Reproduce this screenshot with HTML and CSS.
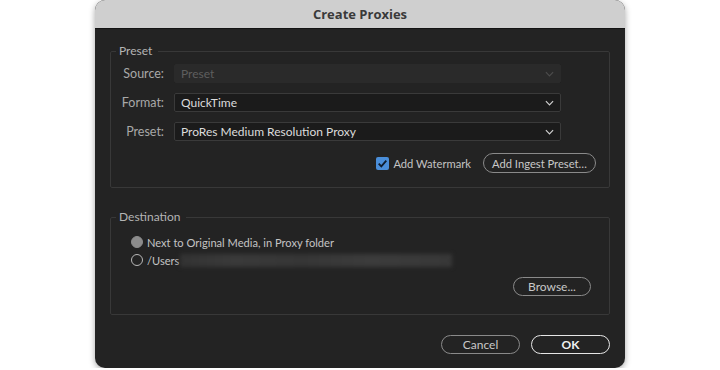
FILE: index.html
```html
<!DOCTYPE html>
<html lang="en">
<head>
  <meta charset="UTF-8">
  <title>Create Proxies</title>
  <link rel="stylesheet" href="styles.css">
</head>
<body>
  <div class="dialog">
    <div class="titlebar">Create Proxies</div>
    <div class="content">
      <fieldset class="group preset">
        <legend>Preset</legend>
        <div class="form">
          <span class="label">Source:</span>
          <div class="select disabled">Preset
            <svg class="chev" viewBox="0 0 10 6"><path d="M1 1l4 4 4-4"/></svg>
          </div>
          <span class="label">Format:</span>
          <div class="select">QuickTime
            <svg class="chev" viewBox="0 0 10 6"><path d="M1 1l4 4 4-4"/></svg>
          </div>
          <span class="label">Preset:</span>
          <div class="select">ProRes Medium Resolution Proxy
            <svg class="chev" viewBox="0 0 10 6"><path d="M1 1l4 4 4-4"/></svg>
          </div>
        </div>
        <div class="actions">
          <label class="check">
            <span class="box"><svg viewBox="0 0 12 12"><path d="M2.5 6.2l2.4 2.4 4.6-5.2"/></svg></span>
            Add Watermark
          </label>
          <button class="pill ingest">Add Ingest Preset…</button>
        </div>
      </fieldset>

      <fieldset class="group dest">
        <legend>Destination</legend>
        <div class="radios">
          <label class="radio"><span class="dot filled"></span>Next to Original Media, in Proxy folder</label>
          <label class="radio"><span class="dot"></span>/Users<span class="blurred"></span></label>
        </div>
        <div class="browse-row">
          <button class="pill browse">Browse...</button>
        </div>
      </fieldset>

      <div class="footer">
        <button class="pill cancel">Cancel</button>
        <button class="pill ok">OK</button>
      </div>
    </div>
  </div>
</body>
</html>
```

FILE: styles.css
```css
body {
  margin: 0;
  background: #ffffff;
  display: flex;
  justify-content: center;
  font-family: Lato, "Noto Sans", sans-serif;
  font-size: 12px;
}
.dialog {
  width: 530px;
  height: 368px;
  background: #232323;
  border-radius: 10px;
  overflow: hidden;
  box-shadow: 0 2px 6px rgba(0,0,0,0.35);
  display: flex;
  flex-direction: column;
}
.titlebar {
  height: 28px;
  background: #cfcfcf;
  color: #3a3a3a;
  font-family: "Open Sans", sans-serif;
  font-weight: 700;
  font-size: 13px;
  display: flex;
  align-items: center;
  justify-content: center;
  flex-shrink: 0;
  border-bottom: 1px solid #141414;
}
.content {
  padding: 15px 15px 0 15px;
  display: flex;
  flex-direction: column;
}
.group {
  margin: 0;
  border: 1px solid #383838;
  border-radius: 2px;
  padding: 0;
  min-width: 0;
}
.group legend {
  color: #b4b4b4;
  padding: 0 6px 0 3px;
  margin-left: 5px;
  line-height: 14px;
}
.form {
  display: grid;
  grid-template-columns: 53px 387px;
  column-gap: 10px;
  row-gap: 10px;
  align-items: center;
  padding: 6px 0 0 0;
}
.label {
  color: #a8a8a8;
  text-align: right;
  font-size: 12.5px;
}
.select {
  height: 19px;
  box-sizing: border-box;
  background: #1b1b1b;
  border: 1px solid #3a3a3a;
  border-radius: 2px;
  color: #dcdcdc;
  display: flex;
  align-items: center;
  justify-content: space-between;
  padding: 0 6px 0 6px;
}
.select.disabled {
  background: #2a2a2a;
  border-color: #2a2a2a;
  color: #5e5e5e;
}
.chev {
  width: 9px;
  height: 6px;
  fill: none;
  stroke: #cfcfcf;
  stroke-width: 1.3;
}
.select.disabled .chev {
  stroke: #4c4c4c;
}
.actions {
  display: flex;
  justify-content: flex-end;
  align-items: center;
  gap: 12px;
  padding: 12px 13px 14px 0;
}
.check {
  display: flex;
  align-items: center;
  gap: 4px;
  color: #c4c4c4;
  font-size: 11.2px;
}
.box {
  width: 13px;
  height: 13px;
  border-radius: 2px;
  background: #4a8ed9;
  display: flex;
}
.box svg {
  width: 13px;
  height: 13px;
  fill: none;
  stroke: #0f1d2e;
  stroke-width: 1.7;
}
.pill {
  font-family: inherit;
  font-size: 12px;
  background: transparent;
  color: #c8c8c8;
  border: 1.5px solid #8a8a8a;
  border-radius: 10px;
  height: 20px;
  padding: 0;
  display: flex;
  align-items: center;
  justify-content: center;
}
.ingest {
  width: 113px;
  font-size: 11.2px;
}
.dest {
  margin-top: 22px;
}
.radios {
  display: flex;
  flex-direction: column;
  gap: 6px;
  padding: 12px 0 0 20px;
}
.radio {
  display: flex;
  align-items: center;
  gap: 4px;
  color: #c4c4c4;
  height: 12px;
  font-size: 11.1px;
}
.dot {
  width: 12px;
  height: 12px;
  box-sizing: border-box;
  border-radius: 50%;
  border: 1.5px solid #b8b8b8;
}
.dot.filled {
  background: #8c8c8c;
  border-color: #8c8c8c;
}
.blurred {
  width: 272px;
  height: 13px;
  margin-left: -3px;
  background: linear-gradient(90deg, #333 0%, #3a3a3a 20%, #363636 45%, #3c3c3c 70%, #383838 100%);
  filter: blur(2px);
}
.browse-row {
  display: flex;
  justify-content: flex-end;
  padding: 11px 18px 18px 0;
}
.browse {
  width: 78px;
  height: 19px;
}
.footer {
  display: flex;
  justify-content: flex-end;
  gap: 11px;
  padding-top: 20px;
}
.cancel, .ok {
  width: 79px;
  height: 19px;
}
.ok {
  border-color: #e6e6e6;
  color: #f0f0f0;
  font-weight: 700;
}
```
